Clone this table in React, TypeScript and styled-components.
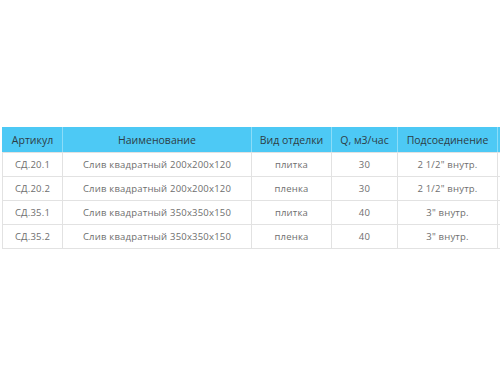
import React from "react";
import styled, { createGlobalStyle } from "styled-components";

const Global = createGlobalStyle`
  html, body { margin: 0; padding: 0; background: #fff; }
  body { font-family: "Open Sans", "Liberation Sans", sans-serif; overflow: hidden; }
`;

const Page = styled.div`
  width: 500px;
  height: 375px;
  overflow: hidden;
  padding: 127px 0 0 2px;
  box-sizing: border-box;
`;

const Table = styled.table`
  border-collapse: collapse;
  table-layout: fixed;
  width: 620px;
`;

const Th = styled.th`
  background: #4dc9f5;
  color: #2d3d46;
  font-size: 10.5px;
  font-weight: 400;
  height: 25px;
  padding: 0;
  text-align: center;
  border-left: 1px solid rgba(255, 255, 255, 0.35);
  border-bottom: 1px solid #e2e2e2;
  &:first-child { border-left: 1px solid #4dc9f5; }
`;

const Td = styled.td`
  color: #6e6e6e;
  font-size: 9.5px;
  letter-spacing: 0.2px;
  height: 23px;
  padding: 0;
  text-align: center;
  border: 1px solid #e2e2e2;
`;

const widths = [60, 189, 80, 66, 100, 125];
const heads = ["Артикул", "Наименование", "Вид отделки", "Q, м3/час", "Подсоединение", ""];
const rows = [
  ["СД.20.1", "Слив квадратный 200x200x120", "плитка", "30", "2 1/2\" внутр.", ""],
  ["СД.20.2", "Слив квадратный 200x200x120", "пленка", "30", "2 1/2\" внутр.", ""],
  ["СД.35.1", "Слив квадратный 350x350x150", "плитка", "40", "3\" внутр.", ""],
  ["СД.35.2", "Слив квадратный 350x350x150", "пленка", "40", "3\" внутр.", ""],
];

export default function App() {
  return (
    <>
      <Global />
      <Page>
        <Table>
          <colgroup>
            {widths.map((w, i) => (
              <col key={i} style={{ width: w }} />
            ))}
          </colgroup>
          <thead>
            <tr>
              {heads.map((h, i) => (
                <Th key={i}>{h}</Th>
              ))}
            </tr>
          </thead>
          <tbody>
            {rows.map((r, i) => (
              <tr key={i}>
                {r.map((c, j) => (
                  <Td key={j}>{c}</Td>
                ))}
              </tr>
            ))}
          </tbody>
        </Table>
      </Page>
    </>
  );
}
